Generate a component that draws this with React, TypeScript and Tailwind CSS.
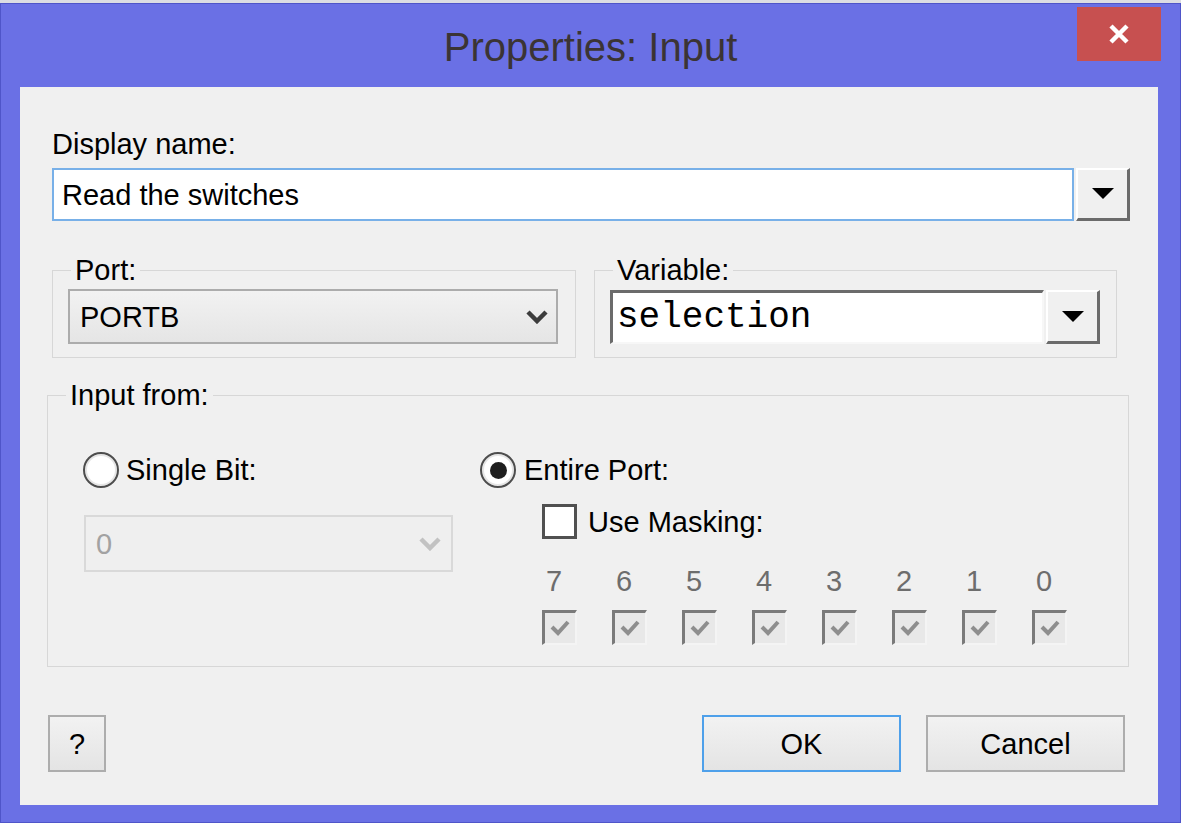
import React from 'react';

const ui = { fontFamily: '"Liberation Sans", Arial, sans-serif' };

function DropButton() {
  return (
    <div className="flex h-full w-[54px] items-center justify-center border-t-2 border-l-2 border-b-[3px] border-r-[3px] border-t-white border-l-white border-b-[#6b6b6b] border-r-[#6b6b6b] bg-[#f0f0f0]">
      <svg width="22" height="12" viewBox="0 0 22 12">
        <polygon points="0,0 22,0 11,11" fill="#000" />
      </svg>
    </div>
  );
}

function Chevron({ color }: { color: string }) {
  return (
    <svg width="22" height="14" viewBox="0 0 22 14">
      <polyline points="2,2 11,11 20,2" fill="none" stroke={color} strokeWidth="4.5" />
    </svg>
  );
}

function Radio({ checked }: { checked?: boolean }) {
  return (
    <div className="flex h-[36px] w-[36px] items-center justify-center rounded-full border-[2px] border-[#4d4d4d] bg-white shadow-[inset_0_0_0_2px_#e6e6e6]">
      {checked && <div className="h-[17px] w-[17px] rounded-full bg-[#1e1e1e]" />}
    </div>
  );
}

function MaskBox() {
  return (
    <div className="flex h-[35px] w-[35px] items-center justify-center border-t-[3px] border-l-[3px] border-b-2 border-r-2 border-t-[#7a7a7a] border-l-[#7a7a7a] border-b-[#f4f4f4] border-r-[#f4f4f4] bg-[#e8e8e8]">
      <svg width="22" height="18" viewBox="0 0 22 18">
        <polyline points="3,8 9,14 19,3" fill="none" stroke="#8e8e8e" strokeWidth="4" />
      </svg>
    </div>
  );
}

function Button({ label, primary, className }: { label: string; primary?: boolean; className?: string }) {
  return (
    <div
      className={`flex h-[57px] items-center justify-center border-2 bg-gradient-to-b from-[#f2f2f2] to-[#e4e4e4] text-[29px] text-black ${
        primary ? 'border-[#4ea0ea]' : 'border-[#adadad]'
      } ${className ?? ''}`}
    >
      {label}
    </div>
  );
}

export default function App() {
  const bits = ['7', '6', '5', '4', '3', '2', '1', '0'];

  return (
    <div className="h-[823px] w-[1181px] border-t-[3px] border-[#dcdde3]" style={ui}>
      <div className="flex h-full flex-col border border-[#4f55c9] bg-[#6a70e5]">
        {/* title bar */}
        <div className="grid h-[83px] grid-cols-[1fr_auto_1fr]">
          <div />
          <div className="self-center pt-[2px] text-[40px] leading-none text-[#3b3434]">Properties: Input</div>
          <div className="flex justify-end">
            <div className="mr-[19px] mt-[3px] flex h-[54px] w-[84px] items-center justify-center bg-[#c75050]">
              <svg width="20" height="20" viewBox="0 0 20 20">
                <path d="M2 2 L18 18 M18 2 L2 18" stroke="#fff" strokeWidth="4.5" />
              </svg>
            </div>
          </div>
        </div>

        {/* client area */}
        <div className="ml-[19px] mr-[22px] flex-1 mb-[17px] bg-[#f0f0f0] pl-[32px] pr-[28px] pt-[40px] text-[29px] leading-[34px] text-black">
          <div>Display name:</div>
          <div className="mt-[7px] flex h-[53px] gap-[2px]">
            <div className="flex flex-1 items-center border-2 border-[#78b0e8] bg-white pl-[8px]">Read the switches</div>
            <DropButton />
          </div>

          <div className="mt-[32px] flex gap-[18px]">
            <fieldset className="w-[524px] border border-[#d7d7d7] px-[15px] pb-[13px]">
              <legend className="ml-[3px] px-[4px]">Port:</legend>
              <div className="mt-[2px] flex h-[55px] w-[490px] items-center justify-between border-2 border-[#acacac] bg-gradient-to-b from-[#f2f2f2] to-[#e5e5e5] pl-[10px] pr-[8px]">
                <span>PORTB</span>
                <Chevron color="#3c3c3c" />
              </div>
            </fieldset>
            <fieldset className="w-[523px] border border-[#d7d7d7] px-[15px] pb-[13px]">
              <legend className="ml-[3px] px-[4px]">Variable:</legend>
              <div className="mt-[3px] flex h-[54px] w-[490px] gap-[2px]">
                <div
                  className="flex flex-1 items-center border-t-[3px] border-l-[3px] border-b-2 border-r-2 border-t-[#6b6b6b] border-l-[#6b6b6b] border-b-[#f7f7f7] border-r-[#f7f7f7] bg-white pl-[4px] text-[36px]"
                  style={{ fontFamily: '"Liberation Mono", "Courier New", monospace' }}
                >
                  selection
                </div>
                <DropButton />
              </div>
            </fieldset>
          </div>

          <fieldset className="-ml-[5px] mt-[20px] h-[289px] w-[1082px] border border-[#d7d7d7]">
            <legend className="ml-[18px] px-[4px]">Input from:</legend>
            <div className="mt-[40px] flex pl-[35px]">
              <div className="w-[397px]">
                <div className="flex h-[36px] items-center gap-[7px]">
                  <Radio />
                  <span>Single Bit:</span>
                </div>
                <div className="ml-[1px] mt-[27px] flex h-[57px] w-[369px] items-center justify-between border-2 border-[#d9d9d9] bg-[#efefef] pl-[10px] pr-[10px] text-[#a2a2a2]">
                  <span>0</span>
                  <Chevron color="#c2c2c2" />
                </div>
              </div>
              <div>
                <div className="flex h-[36px] items-center gap-[8px]">
                  <Radio checked />
                  <span>Entire Port:</span>
                </div>
                <div className="ml-[62px] mt-[16px] flex h-[35px] items-center gap-[11px]">
                  <div className="h-[35px] w-[35px] border-[3px] border-[#505050] bg-white" />
                  <span>Use Masking:</span>
                </div>
                <div className="ml-[62px] mt-[25px] grid w-[560px] grid-cols-8 text-[#6d6d6d]">
                  {bits.map((b) => (
                    <div key={b} className="pl-[4px]">
                      {b}
                    </div>
                  ))}
                </div>
                <div className="ml-[62px] mt-[12px] grid w-[560px] grid-cols-8">
                  {bits.map((b) => (
                    <div key={b}>
                      <MaskBox />
                    </div>
                  ))}
                </div>
              </div>
            </div>
          </fieldset>

          <div className="mt-[48px] flex justify-between">
            <Button label="?" className="-ml-[4px] w-[58px]" />
            <div className="mr-[5px] flex gap-[25px]">
              <Button label="OK" primary className="w-[199px]" />
              <Button label="Cancel" className="w-[199px]" />
            </div>
          </div>
        </div>
      </div>
    </div>
  );
}
